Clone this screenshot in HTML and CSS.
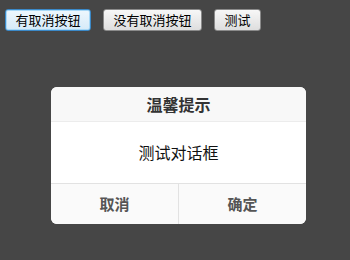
FILE: index.html
```html
<!DOCTYPE html>
<html lang="zh">
<head>
<meta charset="utf-8">
<title>对话框</title>
<link rel="stylesheet" href="styles.css">
</head>
<body>
<div class="toolbar">
  <button class="btn btn-focus">有取消按钮</button>
  <button class="btn">没有取消按钮</button>
  <button class="btn">测试</button>
</div>
<div class="dialog">
  <div class="dialog-title">温馨提示</div>
  <div class="dialog-body">测试对话框</div>
  <div class="dialog-footer">
    <div class="dialog-btn">取消</div>
    <div class="dialog-btn">确定</div>
  </div>
</div>
</body>
</html>
```

FILE: styles.css
```css
html, body {
  margin: 0;
  padding: 0;
  width: 350px;
  height: 260px;
  background: #464646;
  font-family: "Noto Sans CJK SC", "Liberation Sans", sans-serif;
  overflow: hidden;
}

.toolbar {
  display: flex;
  gap: 12px;
  padding: 9px 0 0 5px;
}

.btn {
  height: 22px;
  padding: 0 9.5px;
  font-family: "Noto Sans CJK SC", sans-serif;
  font-size: 13px;
  line-height: 20px;
  color: #000;
  background: linear-gradient(#f7f7f7, #dedede);
  border: 1px solid #8a8a8a;
  border-radius: 3px;
  box-sizing: border-box;
}

.btn-focus {
  border-color: #3b89c8;
  box-shadow: inset 0 0 0 1px #a8d8f6;
  background: linear-gradient(#eef7fd, #d6eaf8);
}

.dialog {
  position: absolute;
  left: 51px;
  top: 87px;
  width: 255px;
  background: #fff;
  border-radius: 6px;
  overflow: hidden;
}

.dialog-title {
  height: 35px;
  box-sizing: border-box;
  border-bottom: 1px solid #ececec;
  background: #f8f8f8;
  text-align: center;
  font-size: 16px;
  font-weight: bold;
  color: #333;
  line-height: 34px;
}

.dialog-body {
  height: 61px;
  text-align: center;
  font-size: 16px;
  color: #111;
  line-height: 61px;
}

.dialog-footer {
  display: flex;
  height: 40px;
  border-top: 1px solid #e2e2e2;
  background: #fafafa;
}

.dialog-btn {
  flex: 1;
  text-align: center;
  font-size: 15px;
  font-weight: bold;
  color: #555;
  line-height: 39px;
}

.dialog-btn + .dialog-btn {
  border-left: 1px solid #e2e2e2;
}
```
